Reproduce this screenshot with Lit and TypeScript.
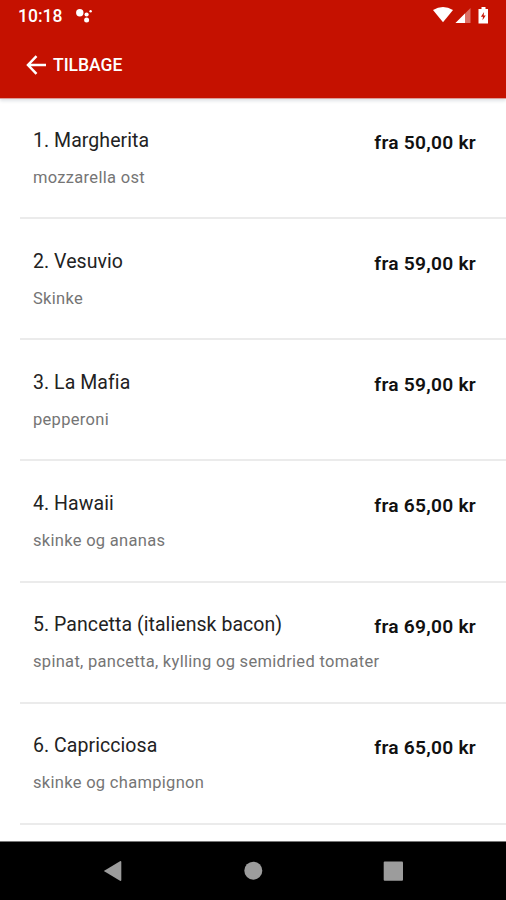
import { LitElement, html, css } from "lit";
import { customElement } from "lit/decorators.js";

interface Dish {
  name: string;
  toppings: string;
  price: string;
}

const dishes: Dish[] = [
  { name: "1. Margherita", toppings: "mozzarella ost", price: "fra 50,00 kr" },
  { name: "2. Vesuvio", toppings: "Skinke", price: "fra 59,00 kr" },
  { name: "3. La Mafia", toppings: "pepperoni", price: "fra 59,00 kr" },
  { name: "4. Hawaii", toppings: "skinke og ananas", price: "fra 65,00 kr" },
  { name: "5. Pancetta (italiensk bacon)", toppings: "spinat, pancetta, kylling og semidried tomater", price: "fra 69,00 kr" },
  { name: "6. Capricciosa", toppings: "skinke og champignon", price: "fra 65,00 kr" },
];

@customElement("app-root")
export class AppRoot extends LitElement {
  static styles = css`
    :host {
      display: flex;
      flex-direction: column;
      height: 900px;
      background: #fff;
      overflow: hidden;
      font-family: Roboto, "Liberation Sans", sans-serif;
    }
    header {
      flex: none;
      height: 98px;
      background: #c51100;
      background-clip: padding-box;
      border-bottom: 1px solid #dc9c98;
      box-shadow: 0 2px 3px rgba(60, 80, 100, 0.16);
      color: #fff;
      z-index: 1;
    }
    .status {
      display: flex;
      align-items: center;
      height: 32px;
      padding: 0 16px 0 18px;
    }
    .clock {
      font-size: 17.5px;
      font-weight: 500;
      line-height: 32px;
      width: 58px;
    }
    .grow { flex: 1; }
    svg { display: block; flex: none; }
    .back {
      display: flex;
      align-items: center;
      height: 65px;
      padding-left: 26px;
      gap: 7px;
      font-size: 17.5px;
      line-height: 23px;
      font-weight: 500;
    }
    .label { padding-top: 1px; }
    main {
      flex: 1;
      min-height: 0;
      overflow: hidden;
    }
    .dish {
      box-sizing: border-box;
      display: flex;
      justify-content: space-between;
      height: 121.2px;
      margin-left: 20px;
      padding: 29.5px 30px 0 13px;
      border-bottom: 2px solid #ebebeb;
      white-space: nowrap;
    }
    .dish:first-child { height: 120px; padding-top: 28.5px; }
    .info { width: 0; }
    .name {
      font-size: 19.5px;
      line-height: 26px;
      letter-spacing: 0.06px;
      color: #222;
    }
    .toppings {
      margin-top: 13px;
      font-size: 16.5px;
      line-height: 22px;
      letter-spacing: 0.3px;
      color: #757575;
    }
    .price {
      margin-top: 2px;
      font-size: 19.2px;
      line-height: 26px;
      letter-spacing: 0.25px;
      font-weight: 600;
      color: #111;
    }
    nav {
      box-sizing: border-box;
      flex: none;
      height: 59px;
      border-top: 1px solid #777;
      background: #000;
    }
  `;

  render() {
    return html`
      <header>
        <div class="status">
          <span class="clock">10:18</span>
          <svg width="18" height="16" viewBox="0 0 18 16" fill="#fff">
            <circle cx="3.8" cy="4.8" r="3.7" />
            <circle cx="10.6" cy="6.5" r="2.1" />
            <circle cx="14.6" cy="3.2" r="1.2" />
            <circle cx="10.6" cy="12" r="2.5" />
          </svg>
          <span class="grow"></span>
          <svg width="57" height="20" viewBox="0 0 57 20" fill="#fff">
            <path d="M0 4Q10 -2 20 4L10 16.3Z" />
            <path d="M22.5 17L37.5 2V17Z" opacity=".4" />
            <path d="M22.5 17L32 7.5V17Z" />
            <path fill-rule="evenodd" d="M48.5 1h4v2h2.5v14.5h-9.5V3h3zM51.1 6l-3.2 4.7h2.1l-.5 3.6 3.2-4.9h-2.1z" />
          </svg>
        </div>
        <div class="back">
          <svg width="20" height="20" viewBox="0 0 20 20" fill="none" stroke="#fff" stroke-width="2.5">
            <path d="M20 10H2.5M10.5 1.2L2 10l8.5 8.8" />
          </svg>
          <span class="label">TILBAGE</span>
        </div>
      </header>
      <main>
        ${dishes.map(
          (d) => html`<div class="dish">
            <div class="info">
              <div class="name">${d.name}</div>
              <div class="toppings">${d.toppings}</div>
            </div>
            <div class="price">${d.price}</div>
          </div>`
        )}
      </main>
      <nav>
        <svg width="506" height="58" viewBox="0 0 506 58" fill="#9c9c9c">
          <path d="M103.8 29L120 19.2q1.3-.5 1.3.8v18q0 1.3-1.3.8Z" />
          <circle cx="253.3" cy="28.7" r="9" />
          <rect x="383.7" y="19.5" width="19.3" height="19.3" rx="1" />
        </svg>
      </nav>
    `;
  }
}
